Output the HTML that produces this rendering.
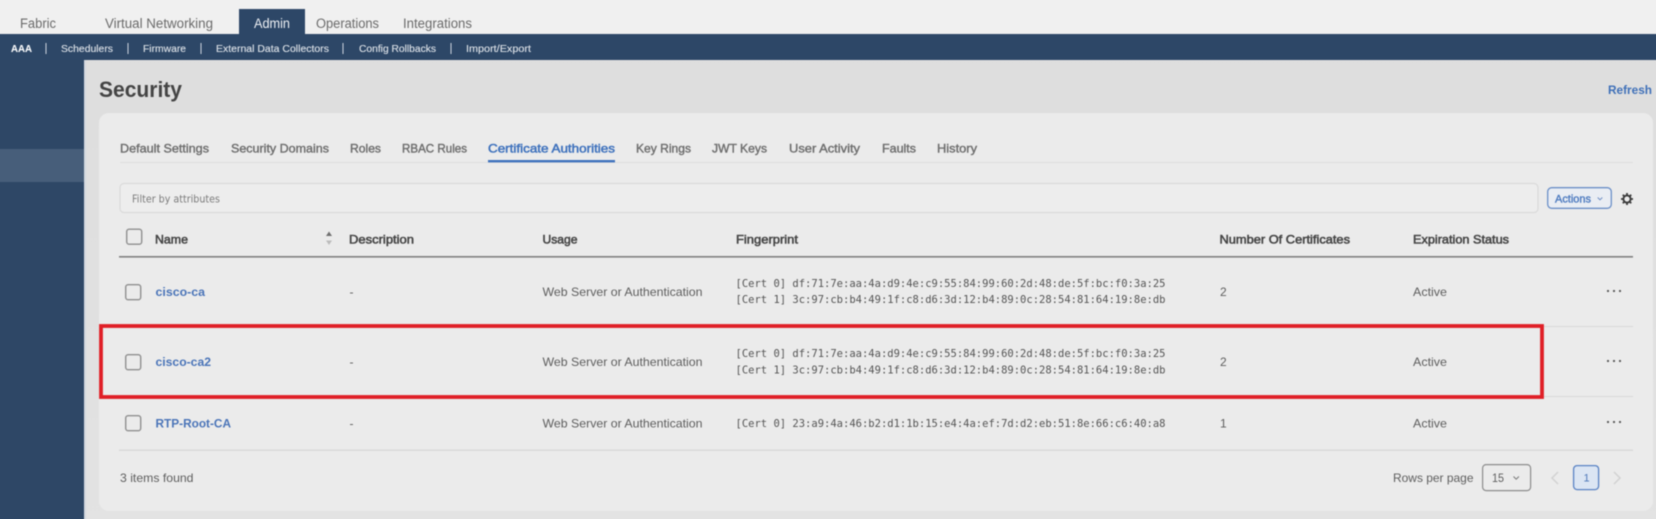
<!DOCTYPE html>
<html><head><meta charset="utf-8"><title>Security</title>
<style>
html,body{margin:0;padding:0;width:1656px;height:519px;overflow:hidden;background:#2e4766}
svg{display:block}
g.f{filter:blur(.45px)}
text{font-family:"Liberation Sans",sans-serif;white-space:pre}
.top{font-size:13.5px;fill:#6b6b6b}
.sub{font-size:10.5px;fill:#dde2e8;stroke:#dde2e8;stroke-width:.12}
.tab{font-size:12px;fill:#6e6e6e;stroke:#6e6e6e;stroke-width:.4}
.th{font-size:12px;fill:#454545;stroke:#454545;stroke-width:.55}
.td{font-size:12px;fill:#5e5e5e}
.lnk{font-size:12px;fill:#4a74b8;font-weight:700}
.mono{font-family:"DejaVu Sans Mono",monospace;font-size:10.5px;fill:#555}
.cb{fill:none;stroke:#8f8f8f;stroke-width:1.4}
.dot{fill:#555}
</style></head><body>
<svg width="1656" height="519" viewBox="0 0 1656 519" xmlns="http://www.w3.org/2000/svg">
<defs><linearGradient id="bg" x1="0" y1="0" x2="0" y2="1"><stop offset="0" stop-color="#dddddd"/><stop offset="1" stop-color="#e3e3e3"/></linearGradient></defs>
<g class="f">
<rect x="-10" y="-10" width="1676" height="539" fill="url(#bg)"/>
<rect x="-10" y="-10" width="1676" height="44" fill="#f0f0f0"/>
<rect x="-10" y="34" width="1676" height="26" fill="#2d4767"/>
<rect x="-10" y="60" width="94" height="469" fill="#2e4766"/>
<rect x="-10" y="149" width="94" height="33" fill="#475e7a"/>
<rect x="84" y="60" width="2" height="469" fill="#d4d9e0"/>
<rect x="239" y="9" width="66" height="25" fill="#2d4767"/>

<text class="top" x="20" y="28" textLength="36" lengthAdjust="spacingAndGlyphs">Fabric</text>
<text class="top" x="105" y="28" textLength="108" lengthAdjust="spacingAndGlyphs">Virtual Networking</text>
<text class="top" x="254" y="28" textLength="36" lengthAdjust="spacingAndGlyphs" style="fill:#eef1f5">Admin</text>
<text class="top" x="316" y="28" textLength="63" lengthAdjust="spacingAndGlyphs">Operations</text>
<text class="top" x="403" y="28" textLength="69" lengthAdjust="spacingAndGlyphs">Integrations</text>

<text class="sub" x="11" y="52" textLength="21" lengthAdjust="spacingAndGlyphs" style="font-weight:700;fill:#fff">AAA</text>
<text class="sub" x="61" y="52" textLength="52" lengthAdjust="spacingAndGlyphs">Schedulers</text>
<text class="sub" x="143" y="52" textLength="43" lengthAdjust="spacingAndGlyphs">Firmware</text>
<text class="sub" x="216" y="52" textLength="113" lengthAdjust="spacingAndGlyphs">External Data Collectors</text>
<text class="sub" x="359" y="52" textLength="77" lengthAdjust="spacingAndGlyphs">Config Rollbacks</text>
<text class="sub" x="466" y="52" textLength="65" lengthAdjust="spacingAndGlyphs">Import/Export</text>
<g fill="#cfd6df"><rect x="45.5" y="43" width="1" height="11"/><rect x="127.5" y="43" width="1" height="11"/><rect x="200.5" y="43" width="1" height="11"/><rect x="342.5" y="43" width="1" height="11"/><rect x="450.5" y="43" width="1" height="11"/></g>

<text x="99" y="97" textLength="83" lengthAdjust="spacingAndGlyphs" style="font-size:22px;font-weight:700;fill:#444">Security</text>
<text x="1608" y="94" textLength="44" lengthAdjust="spacingAndGlyphs" style="font-size:12px;font-weight:700;fill:#3f70b8">Refresh</text>

<rect x="99" y="113" width="1554" height="398" rx="10" fill="#ebebeb"/>

<text class="tab" x="120" y="152.5" textLength="89" lengthAdjust="spacingAndGlyphs">Default Settings</text>
<text class="tab" x="231" y="152.5" textLength="98" lengthAdjust="spacingAndGlyphs">Security Domains</text>
<text class="tab" x="350" y="152.5" textLength="31" lengthAdjust="spacingAndGlyphs">Roles</text>
<text class="tab" x="402" y="152.5" textLength="65" lengthAdjust="spacingAndGlyphs">RBAC Rules</text>
<text class="tab" x="488" y="152.5" textLength="127" lengthAdjust="spacingAndGlyphs" style="fill:#3f72bd;stroke:#3f72bd;stroke-width:.5">Certificate Authorities</text>
<text class="tab" x="636" y="152.5" textLength="55" lengthAdjust="spacingAndGlyphs">Key Rings</text>
<text class="tab" x="712" y="152.5" textLength="55" lengthAdjust="spacingAndGlyphs">JWT Keys</text>
<text class="tab" x="789" y="152.5" textLength="71" lengthAdjust="spacingAndGlyphs">User Activity</text>
<text class="tab" x="882" y="152.5" textLength="34" lengthAdjust="spacingAndGlyphs">Faults</text>
<text class="tab" x="937" y="152.5" textLength="40" lengthAdjust="spacingAndGlyphs">History</text>
<rect x="120" y="162" width="1513" height="1" fill="#dedede"/>
<rect x="488" y="160" width="127" height="2.4" fill="#3f72bd"/>

<rect x="120" y="183.5" width="1418" height="29" rx="4" fill="#ededed" stroke="#dadada" stroke-width="1.2"/>
<text x="132" y="202.5" textLength="88" lengthAdjust="spacingAndGlyphs" style="font-size:10.5px;fill:#7c7c7c;font-family:'DejaVu Sans',sans-serif">Filter by attributes</text>

<rect x="1547.7" y="187.7" width="63.6" height="20.6" rx="4" fill="#e9edf3" stroke="#6c90c8" stroke-width="1.3"/>
<text x="1555" y="202.5" textLength="36" lengthAdjust="spacingAndGlyphs" style="font-size:11px;fill:#4f7cc0;stroke:#4f7cc0;stroke-width:.4">Actions</text>
<path d="M1597.7 197.5l2.3 2.3 2.3-2.3" fill="none" stroke="#6f8fc4" stroke-width="1"/>
<g transform="translate(1627 199)" fill="none" stroke="#3a3a3a">
<circle r="3.6" stroke-width="1.9"/>
<path d="M0-6V-4M0 6V4M-6 0H-4M6 0H4M-4.2-4.2L-2.8-2.8M4.2 4.2L2.8 2.8M-4.2 4.2L-2.8 2.8M4.2-4.2L2.8-2.8" stroke-width="1.8"/>
</g>

<rect class="cb" x="126.7" y="229.2" width="15" height="15" rx="2.5"/>
<text class="th" x="155" y="243.5" textLength="33" lengthAdjust="spacingAndGlyphs">Name</text>
<path d="M329 231.5l-3 4.5h6z" fill="#6f6f6f"/><path d="M329 245l-3-4.5h6z" fill="#bcbcbc"/>
<text class="th" x="349" y="243.5" textLength="65" lengthAdjust="spacingAndGlyphs">Description</text>
<text class="th" x="542.5" y="243.5" textLength="35" lengthAdjust="spacingAndGlyphs">Usage</text>
<text class="th" x="736" y="243.5" textLength="62" lengthAdjust="spacingAndGlyphs">Fingerprint</text>
<text class="th" x="1219.5" y="243.5" textLength="130.5" lengthAdjust="spacingAndGlyphs">Number Of Certificates</text>
<text class="th" x="1413" y="243.5" textLength="96" lengthAdjust="spacingAndGlyphs">Expiration Status</text>
<rect x="119" y="256" width="1514" height="1.6" fill="#808080"/>

<!-- row 1 -->
<rect class="cb" x="125.7" y="284.7" width="15" height="15" rx="2.5"/>
<text class="lnk" x="155.5" y="296" textLength="49.5" lengthAdjust="spacingAndGlyphs">cisco-ca</text>
<text class="td" x="349.5" y="296">-</text>
<text class="td" x="542.5" y="296" textLength="160" lengthAdjust="spacingAndGlyphs">Web Server or Authentication</text>
<text class="mono" x="735.5" y="287" textLength="430">[Cert 0] df:71:7e:aa:4a:d9:4e:c9:55:84:99:60:2d:48:de:5f:bc:f0:3a:25</text>
<text class="mono" x="735.5" y="303" textLength="430">[Cert 1] 3c:97:cb:b4:49:1f:c8:d6:3d:12:b4:89:0c:28:54:81:64:19:8e:db</text>
<text class="td" x="1220" y="296">2</text>
<text class="td" x="1413" y="296" textLength="34" lengthAdjust="spacingAndGlyphs">Active</text>
<g class="dot"><circle cx="1608" cy="291" r="1.1"/><circle cx="1614" cy="291" r="1.1"/><circle cx="1620" cy="291" r="1.1"/></g>
<rect x="119" y="326" width="1514" height="1" fill="#d9d9d9"/>

<!-- row 2 -->
<rect class="cb" x="125.7" y="354.7" width="15" height="15" rx="2.5"/>
<text class="lnk" x="155.5" y="366" textLength="55.5" lengthAdjust="spacingAndGlyphs">cisco-ca2</text>
<text class="td" x="349.5" y="366">-</text>
<text class="td" x="542.5" y="366" textLength="160" lengthAdjust="spacingAndGlyphs">Web Server or Authentication</text>
<text class="mono" x="735.5" y="357" textLength="430">[Cert 0] df:71:7e:aa:4a:d9:4e:c9:55:84:99:60:2d:48:de:5f:bc:f0:3a:25</text>
<text class="mono" x="735.5" y="373.5" textLength="430">[Cert 1] 3c:97:cb:b4:49:1f:c8:d6:3d:12:b4:89:0c:28:54:81:64:19:8e:db</text>
<text class="td" x="1220" y="366">2</text>
<text class="td" x="1413" y="366" textLength="34" lengthAdjust="spacingAndGlyphs">Active</text>
<g class="dot"><circle cx="1608" cy="361" r="1.1"/><circle cx="1614" cy="361" r="1.1"/><circle cx="1620" cy="361" r="1.1"/></g>
<rect x="119" y="396" width="1514" height="1" fill="#d9d9d9"/>

<!-- row 3 -->
<rect class="cb" x="125.7" y="415.7" width="15" height="15" rx="2.5"/>
<text class="lnk" x="155.5" y="427.5" textLength="75.5" lengthAdjust="spacingAndGlyphs">RTP-Root-CA</text>
<text class="td" x="349.5" y="427.5">-</text>
<text class="td" x="542.5" y="427.5" textLength="160" lengthAdjust="spacingAndGlyphs">Web Server or Authentication</text>
<text class="mono" x="735.5" y="427" textLength="430">[Cert 0] 23:a9:4a:46:b2:d1:1b:15:e4:4a:ef:7d:d2:eb:51:8e:66:c6:40:a8</text>
<text class="td" x="1220" y="427.5">1</text>
<text class="td" x="1413" y="427.5" textLength="34" lengthAdjust="spacingAndGlyphs">Active</text>
<g class="dot"><circle cx="1608" cy="422" r="1.1"/><circle cx="1614" cy="422" r="1.1"/><circle cx="1620" cy="422" r="1.1"/></g>
<rect x="119" y="449.5" width="1514" height="1.4" fill="#d8d8d8"/>

<!-- footer -->
<text class="td" x="120" y="482" textLength="73.5" lengthAdjust="spacingAndGlyphs">3 items found</text>
<text class="td" x="1393" y="482" textLength="80.5" lengthAdjust="spacingAndGlyphs">Rows per page</text>
<rect x="1482.6" y="464.6" width="48" height="26" rx="3.5" fill="none" stroke="#8c8c8c" stroke-width="1.2"/>
<text class="td" x="1492" y="482" textLength="12" lengthAdjust="spacingAndGlyphs">15</text>
<path d="M1513.5 476.5l2.7 2.7 2.7-2.7" fill="none" stroke="#777" stroke-width="1"/>
<path d="M1558 472l-6 6 6 6" fill="none" stroke="#d2d2d2" stroke-width="1.5"/>
<rect x="1573.6" y="465.6" width="25" height="24" rx="3.5" fill="#dbe5f3" stroke="#5a83c4" stroke-width="1.3"/>
<text x="1583.5" y="481.5" style="font-size:11px;fill:#4f78b8">1</text>
<path d="M1614 472l6 6-6 6" fill="none" stroke="#d2d2d2" stroke-width="1.5"/>

<!-- red highlight -->
<rect x="101" y="326" width="1441" height="71" fill="none" stroke="#e01f26" stroke-width="3.8"/>
</g>
</svg>
</body></html>
